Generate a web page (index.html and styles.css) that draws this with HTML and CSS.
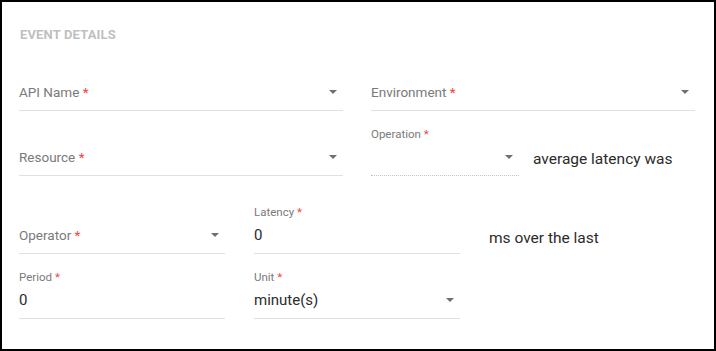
FILE: index.html
```html
<!DOCTYPE html>
<html lang="en">
<head>
<meta charset="utf-8">
<title>Event details</title>
<link rel="stylesheet" href="styles.css">
</head>
<body>
<div class="card">
  <h2 class="title">EVENT DETAILS</h2>

  <div class="row cols-2 row-a">
    <div class="field">
      <div class="control"><span class="hint">API Name <span class="req">*</span></span><svg class="arrow" viewBox="7 10 10 5" width="8" height="4"><path d="M7 10l5 5 5-5z"/></svg></div>
    </div>
    <div class="field">
      <div class="control"><span class="hint">Environment <span class="req">*</span></span><svg class="arrow" viewBox="7 10 10 5" width="8" height="4"><path d="M7 10l5 5 5-5z"/></svg></div>
    </div>
  </div>

  <div class="row cols-2 row-b">
    <div class="field">
      <div class="control"><span class="hint">Resource <span class="req">*</span></span><svg class="arrow" viewBox="7 10 10 5" width="8" height="4"><path d="M7 10l5 5 5-5z"/></svg></div>
    </div>
    <div class="inline">
      <div class="field field-narrow field-disabled">
        <label class="label">Operation <span class="req">*</span></label>
        <div class="control"><span class="value"></span><svg class="arrow" viewBox="7 10 10 5" width="8" height="4"><path d="M7 10l5 5 5-5z"/></svg></div>
      </div>
      <span class="text text-b">average latency was</span>
    </div>
  </div>

  <div class="row cols-3 row-c">
    <div class="field">
      <div class="control"><span class="hint">Operator <span class="req">*</span></span><svg class="arrow" viewBox="7 10 10 5" width="8" height="4"><path d="M7 10l5 5 5-5z"/></svg></div>
    </div>
    <div class="field">
      <label class="label">Latency <span class="req">*</span></label>
      <div class="control"><span class="value">0</span></div>
    </div>
    <span class="text text-c">ms over the last</span>
  </div>

  <div class="row cols-3 row-d">
    <div class="field">
      <label class="label">Period <span class="req">*</span></label>
      <div class="control"><span class="value">0</span></div>
    </div>
    <div class="field">
      <label class="label">Unit <span class="req">*</span></label>
      <div class="control"><span class="value">minute(s)</span><svg class="arrow" viewBox="7 10 10 5" width="8" height="4"><path d="M7 10l5 5 5-5z"/></svg></div>
    </div>
  </div>
</div>
</body>
</html>
```

FILE: styles.css
```css
html, body {
  margin: 0;
  padding: 0;
  background: #ffffff;
}

.card {
  box-sizing: border-box;
  width: 716px;
  height: 351px;
  border: 2px solid #000000;
  background: #ffffff;
  padding: 25px 19px 0 17px;
  font-family: Roboto, "Noto Sans", Arial, sans-serif;
  color: #2b2b2b;
}

.title {
  margin: 0 0 0 1px;
  font-size: 13px;
  line-height: 16px;
  font-weight: 700;
  letter-spacing: 0.15px;
  color: #bfbfbf;
}

.row {
  display: grid;
}

.cols-2 {
  grid-template-columns: 1fr 1fr;
  column-gap: 28px;
}

.cols-3 {
  grid-template-columns: 206px 206px 206px;
  column-gap: 29px;
}

.row-a { margin-top: 18px; }
.row-b { margin-top: 15px; }
.row-c { margin-top: 28px; }
.row-d { margin-top: 15px; }

.field {
  box-sizing: border-box;
  height: 50px;
  display: flex;
  flex-direction: column;
  justify-content: flex-end;
  padding: 0 0 6px 0;
  border-bottom: 1px solid #e0e0e0;
}

.field-narrow {
  width: 148px;
  flex: none;
}

.field-disabled {
  border-bottom: 1px dotted #c4c4c4;
}

.label {
  font-size: 11.5px;
  line-height: 16px;
  color: #7a7a7a;
  margin-bottom: 3px;
}

.control {
  display: flex;
  align-items: center;
  height: 24px;
}

.hint {
  flex: 1;
  font-size: 13.5px;
  line-height: 24px;
  color: #7a7a7a;
}

.value {
  flex: 1;
  font-size: 15px;
  line-height: 24px;
  color: #2b2b2b;
}

.req {
  color: #f44336;
}

.arrow {
  flex: none;
  fill: #707070;
  margin-right: 6px;
}

.inline {
  display: flex;
  align-items: flex-end;
}

.text {
  font-size: 15.5px;
  line-height: 24px;
  color: #2b2b2b;
}

.text-b {
  margin: 0 0 5px 14px;
}

.text-c {
  align-self: end;
  margin-bottom: 4px;
}
```
